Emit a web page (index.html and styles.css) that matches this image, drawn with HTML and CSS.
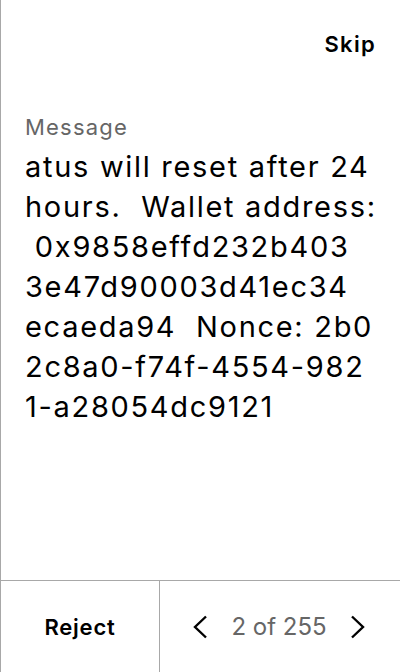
FILE: index.html
```html
<!DOCTYPE html>
<html>
<head>
<meta charset="utf-8">
<link rel="stylesheet" href="styles.css">
</head>
<body>
<div class="screen">
  <header class="top">
    <span class="skip">Skip</span>
  </header>
  <main class="content">
    <div class="label">Message</div>
    <p class="message">atus will reset after 24<br>hours.&nbsp; Wallet address:<br>&nbsp;0x9858effd232b403<br>3e47d90003d41ec34<br>ecaeda94&nbsp; Nonce: 2b0<br>2c8a0-f74f-4554-982<br>1-a28054dc9121</p>
  </main>
  <footer class="bottom">
    <div class="reject">Reject</div>
    <div class="pager">
      <svg class="chev" width="16" height="24" viewBox="0 0 16 24"><path d="M14 1.5 L3 12 L14 22.5" fill="none" stroke="#000" stroke-width="2.4"/></svg>
      <span class="count">2 of 255</span>
      <svg class="chev" width="16" height="24" viewBox="0 0 16 24"><path d="M2 1.5 L13 12 L2 22.5" fill="none" stroke="#000" stroke-width="2.4"/></svg>
    </div>
  </footer>
</div>
</body>
</html>
```

FILE: styles.css
```css
html, body {
  margin: 0;
  padding: 0;
  background: #fff;
}
body {
  font-family: Inter, "Noto Sans", sans-serif;
  color: #000;
}
.screen {
  width: 399px;
  height: 672px;
  border-left: 1px solid #a8a8a8;
  display: flex;
  flex-direction: column;
}
.top {
  height: 88px;
  display: flex;
  justify-content: flex-end;
  align-items: center;
  padding: 0 24px;
}
.skip {
  font-size: 22px;
  font-weight: 600;
  letter-spacing: 1.3px;
}
.content {
  flex: 1;
  padding: 24px 24px 0 24px;
}
.label {
  font-size: 22px;
  color: #666;
  line-height: 30px;
  letter-spacing: 1.2px;
}
.message {
  margin: 5px 0 0 0;
  font-size: 29px;
  line-height: 40px;
  letter-spacing: 1.7px;
  white-space: nowrap;
}
.bottom {
  height: 91px;
  border-top: 1px solid #a8a8a8;
  display: grid;
  grid-template-columns: 159px 1fr;
}
.reject {
  border-right: 1px solid #a8a8a8;
  display: flex;
  align-items: center;
  justify-content: center;
  font-size: 22px;
  font-weight: 600;
  letter-spacing: 0.8px;
}
.pager {
  display: flex;
  align-items: center;
  justify-content: center;
  gap: 23px;
  padding-right: 2px;
}
.count {
  font-size: 24px;
  color: #666;
}
```
